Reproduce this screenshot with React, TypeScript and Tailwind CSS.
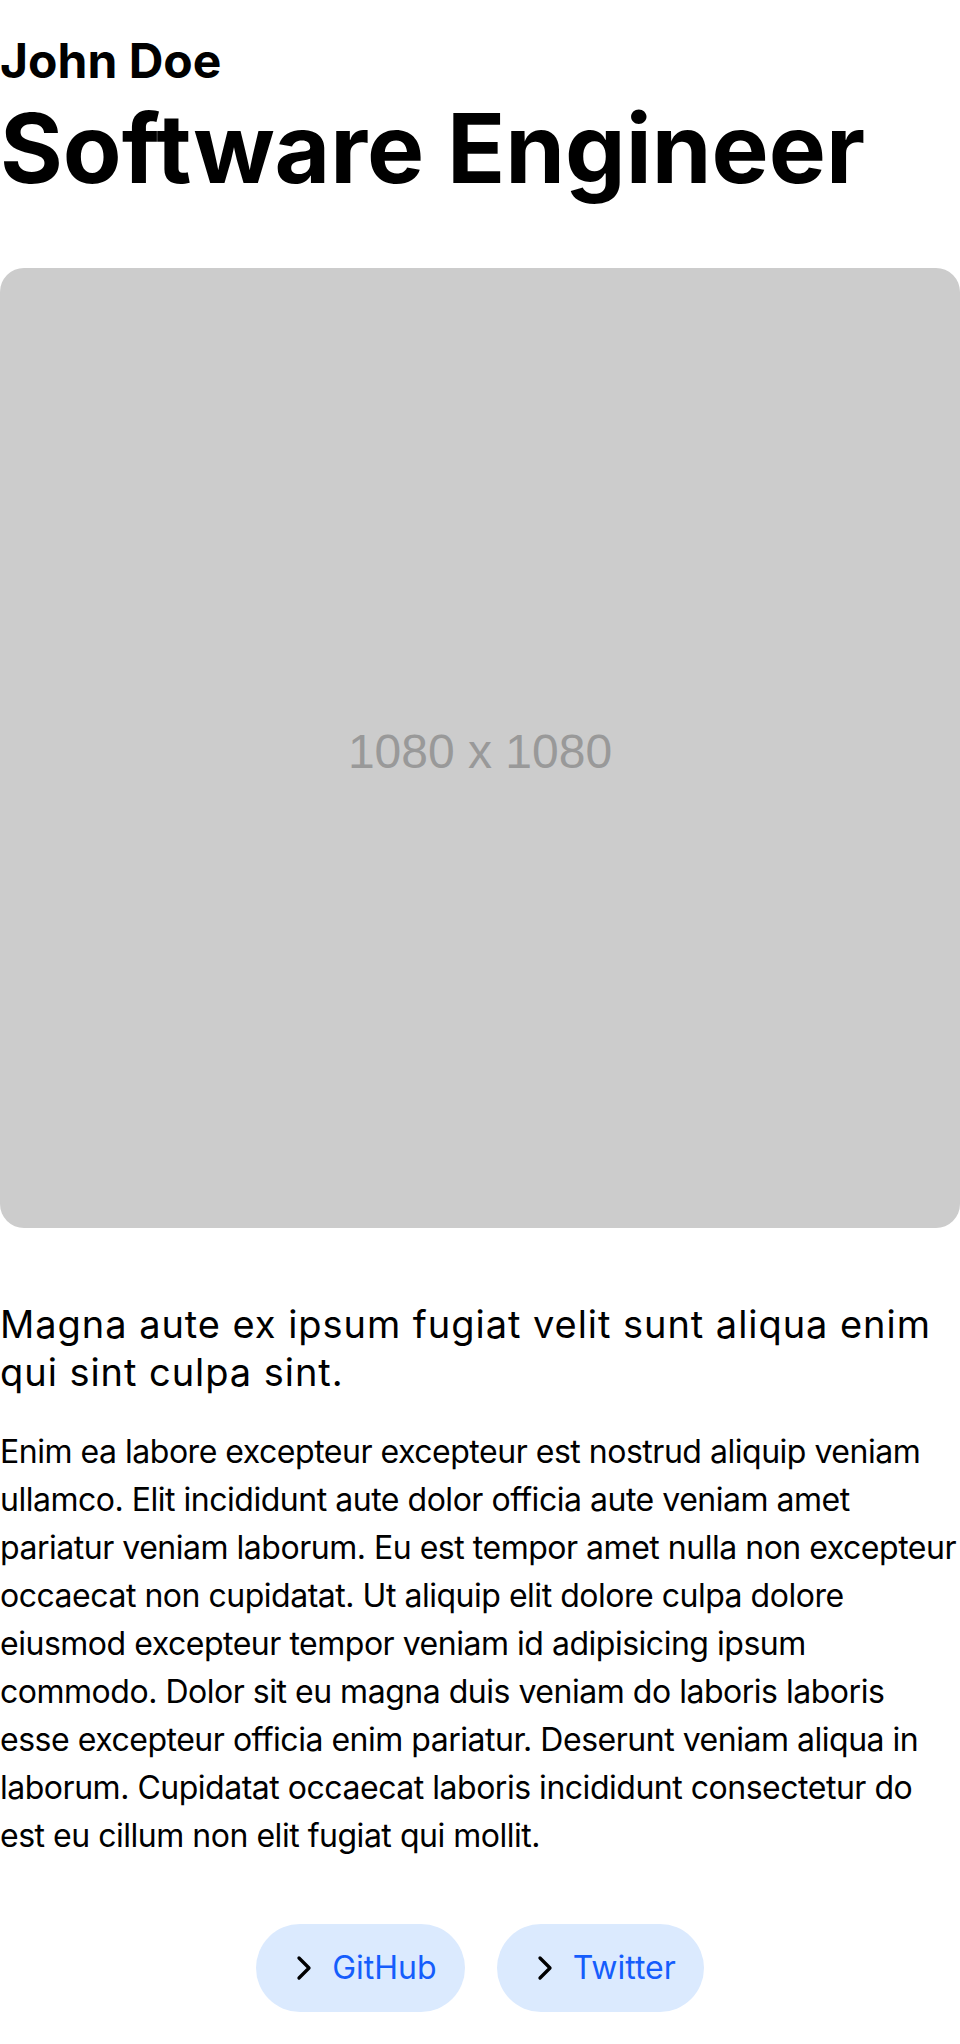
import { ChevronRight } from 'lucide-react';

const links = [
  { id: 'github', label: 'GitHub' },
  { id: 'twitter', label: 'Twitter' },
];

export default function App() {
  return (
    <div className="min-h-screen bg-white text-black font-['Inter',sans-serif] pt-[37px] pb-8">
      {/* Header */}
      <header>
        <h2 className="text-[48px] leading-none font-bold">John Doe</h2>
        <h1 className="mt-[15px] text-[96px] leading-none font-bold">Software Engineer</h1>
      </header>

      {/* Placeholder image */}
      <div className="mt-[72px] w-full aspect-square rounded-3xl bg-[#cccccc] flex items-center justify-center">
        <span className="mt-2 font-['Liberation_Sans',Arial,sans-serif] text-[48px] text-[#999999]">
          1080 x 1080
        </span>
      </div>

      {/* About */}
      <section className="mt-[72px]">
        <p className="text-[38px] leading-[48px] tracking-[0.025em]">
          Magna aute ex ipsum fugiat velit sunt aliqua enim qui sint culpa sint.
        </p>
        <p className="mt-8 text-[32px] leading-[48px] tracking-[-0.015em]">
          Enim ea labore excepteur excepteur est nostrud aliquip veniam ullamco. Elit incididunt aute
          dolor officia aute veniam amet pariatur veniam laborum. Eu est tempor amet nulla non
          excepteur occaecat non cupidatat. Ut aliquip elit dolore culpa dolore eiusmod excepteur
          tempor veniam id adipisicing ipsum commodo. Dolor sit eu magna duis veniam do laboris
          laboris esse excepteur officia enim pariatur. Deserunt veniam aliqua in laborum. Cupidatat
          occaecat laboris incididunt consectetur do est eu cillum non elit fugiat qui mollit.
        </p>
      </section>

      {/* Links */}
      <div className="mt-16 flex justify-center gap-8">
        {links.map((link) => (
          <a
            key={link.id}
            href="#"
            className="flex items-center gap-2 rounded-full bg-blue-100 px-7 py-6 text-[32px] leading-[40px] text-blue-600"
          >
            <ChevronRight className="w-10 h-10 text-black" />
            {link.label}
          </a>
        ))}
      </div>
    </div>
  );
}
